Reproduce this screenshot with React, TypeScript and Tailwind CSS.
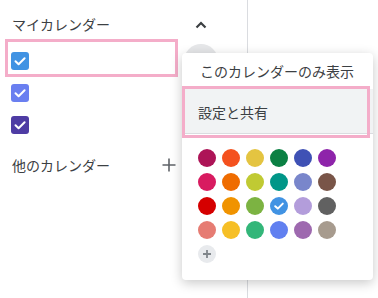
import React from "react";

const swatches = [
  ["#ad1457", "#f4511e", "#e4c441", "#0b8043", "#3f51b5", "#8e24aa"],
  ["#d81b60", "#ef6c00", "#c0ca33", "#009688", "#7986cb", "#795548"],
  ["#d50000", "#f09300", "#7cb342", "#4193e3", "#b39ddb", "#616161"],
  ["#e67c73", "#f6bf26", "#33b679", "#6180f0", "#9e69af", "#a79b8e"],
];

function Check({ color }: { color: string }) {
  return (
    <div className="w-[18px] h-[18px] rounded-[3px] flex items-center justify-center" style={{ backgroundColor: color }}>
      <svg width="18" height="18" viewBox="0 0 18 18">
        <path d="M4.5 9.2 L7.6 12.2 L13.6 6.2" fill="none" stroke="white" strokeWidth="2" strokeLinecap="round" strokeLinejoin="round" />
      </svg>
    </div>
  );
}

export default function App() {
  return (
    <div
      className="relative w-[378px] h-[298px] overflow-hidden bg-white text-[#3c4043] text-[14px]"
      style={{ fontFamily: '"Noto Sans CJK JP", "Noto Sans", sans-serif' }}
    >
      <div className="flex h-full">
        <div className="w-[248px] h-full border-r border-[#dadce0] flex flex-col">
          <div className="h-[45px] flex items-center justify-between pl-3 pr-[40px] pt-[3px]">
            <span>マイカレンダー</span>
            <svg width="12" height="8" viewBox="0 0 12 8" className="mt-[2px]">
              <polyline points="1.5,6.5 6,2 10.5,6.5" fill="none" stroke="#3c4043" strokeWidth="2.2" />
            </svg>
          </div>
          <div className="relative h-8 flex items-center pl-[11px]">
            <Check color="#4193e3" />
            <div className="absolute left-[184px] top-[-1px] w-[34px] h-[34px] rounded-full bg-[#e6e7e9]" />
          </div>
          <div className="h-8 flex items-center pl-[11px]">
            <Check color="#6a7ff0" />
          </div>
          <div className="h-8 flex items-center pl-[11px]">
            <Check color="#4e3ca4" />
          </div>
          <div className="mt-1 h-10 flex items-center justify-between pl-3 pr-[71px]">
            <span>他のカレンダー</span>
            <svg width="14" height="14" viewBox="0 0 14 14">
              <path d="M7 0.5 V13.5 M0.5 7 H13.5" stroke="#5f6368" strokeWidth="1.6" />
            </svg>
          </div>
        </div>
        <div className="flex-1" />
      </div>

      {/* annotation on first calendar row */}
      <div className="absolute left-[5px] top-[39px] w-[173px] h-[38px] border-[3px] border-[#f4adc9]" />

      {/* popup menu */}
      <div className="absolute left-[182px] top-[53px] w-[191px] h-[227px] bg-white rounded-[4px] shadow-[0_3px_12px_rgba(0,0,0,0.22)] flex flex-col">
        <div className="h-9 flex items-center pl-[18px]">このカレンダーのみ表示</div>
        <div className="h-[45px] flex items-center pl-4 pt-[3px] bg-[#f1f3f4] border-b border-[#dadce0]">設定と共有</div>
        <div className="pt-[15px] pl-4">
          <div className="grid grid-cols-6 gap-[6px] w-fit">
            {swatches.flat().map((c, i) => (
              <div key={i} className="w-[18px] h-[18px] rounded-full flex items-center justify-center" style={{ backgroundColor: c }}>
                {i === 15 && (
                  <svg width="12" height="12" viewBox="0 0 12 12">
                    <path d="M2.2 6.2 L4.8 8.6 L9.8 3.6" fill="none" stroke="white" strokeWidth="2" strokeLinecap="round" strokeLinejoin="round" />
                  </svg>
                )}
              </div>
            ))}
            <div className="w-[18px] h-[18px] rounded-full bg-[#e8eaed] flex items-center justify-center">
              <svg width="10" height="10" viewBox="0 0 10 10">
                <path d="M5 1 V9 M1 5 H9" stroke="#80868b" strokeWidth="1.8" />
              </svg>
            </div>
          </div>
        </div>
      </div>

      {/* annotation on menu item */}
      <div className="absolute left-[182px] top-[86px] w-[188px] h-[52px] border-[3px] border-[#f4adc9]" />
    </div>
  );
}
